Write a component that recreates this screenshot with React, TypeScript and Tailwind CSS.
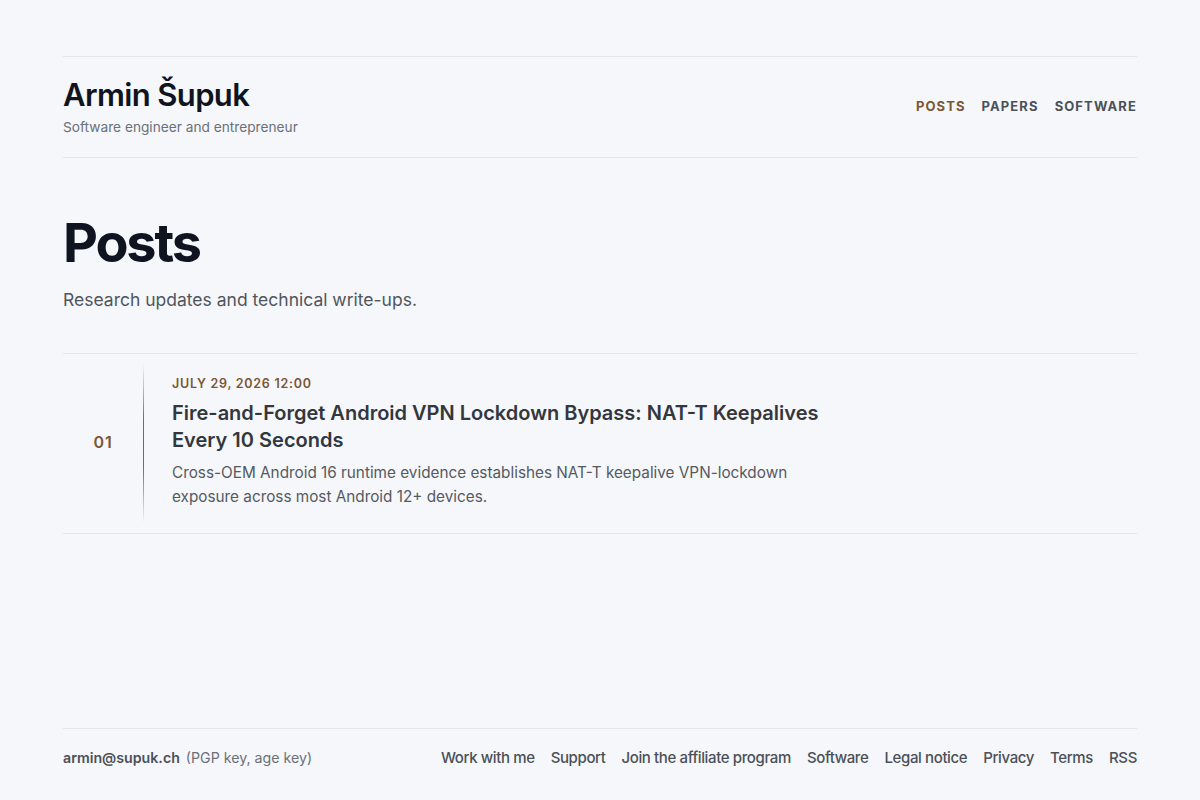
import React from "react";

const posts = [
  {
    n: "01",
    date: "July 29, 2026 12:00",
    title: "Fire-and-Forget Android VPN Lockdown Bypass: NAT-T Keepalives Every 10 Seconds",
    summary:
      "Cross-OEM Android 16 runtime evidence establishes NAT-T keepalive VPN-lockdown exposure across most Android 12+ devices.",
  },
];

const footerLinks = [
  "Work with me",
  "Support",
  "Join the affiliate program",
  "Software",
  "Legal notice",
  "Privacy",
  "Terms",
  "RSS",
];

export default function App() {
  return (
    <div
      className="min-h-[800px] bg-[#f5f7fa] flex flex-col"
      style={{ fontFamily: "Inter, 'Noto Sans', sans-serif" }}
    >
      <div className="mx-auto w-[1074px] flex flex-col flex-1 pt-[56px]">
        <header className="flex items-center justify-between border-t border-b border-[#e2e5ea] h-[102px]">
          <div className="flex flex-col -mt-[2px]">
            <a className="text-[31px] leading-[38px] font-semibold text-[#0f1420] tracking-[-0.02em]">
              Armin Šupuk
            </a>
            <span className="text-[13.7px] leading-[20px] text-[#6b7079] mt-[3px]">
              Software engineer and entrepreneur
            </span>
          </div>
          <nav className="flex items-center gap-[16px] text-[13px] font-bold tracking-[0.085em] uppercase">
            <a className="text-[#7a5634]">Posts</a>
            <a className="text-[#4b5058]">Papers</a>
            <a className="text-[#4b5058]">Software</a>
          </nav>
        </header>

        <main className="flex-1">
          <section className="pt-[52px] pb-[39px]">
            <h1 className="text-[54px] leading-[66px] font-bold text-[#0f1420] tracking-[-0.04em]">
              Posts
            </h1>
            <p className="mt-[10px] text-[17.5px] leading-[28px] text-[#50555e]">
              Research updates and technical write-ups.
            </p>
          </section>

          <ol className="border-t border-[#e2e5ea]">
            {posts.map((p) => (
              <li key={p.n} className="flex border-b border-[#e2e5ea]">
                <div className="w-[80px] flex items-center justify-center py-[10px]">
                  <span className="text-[16px] font-semibold text-[#7a5634] tracking-[0.05em] -mt-[3px]">
                    {p.n}
                  </span>
                </div>
                <div className="w-px my-[10px] bg-[linear-gradient(to_bottom,transparent,#6b6e74_35%,#8a6238_50%,#6b6e74_65%,transparent)]" />
                <div className="pl-[28px] pt-[21px] pb-[24px] max-w-[690px]">
                  <div className="text-[12.5px] leading-[18px] font-semibold uppercase tracking-[0.06em] text-[#7a5634]">
                    {p.date}
                  </div>
                  <h2 className="mt-[7px] text-[20px] leading-[27px] font-semibold text-[#33373d]">
                    {p.title}
                  </h2>
                  <p className="mt-[7px] text-[15.3px] leading-[24px] text-[#555a62]">
                    {p.summary}
                  </p>
                </div>
              </li>
            ))}
          </ol>
        </main>

        <footer className="border-t border-[#e2e5ea] flex items-center justify-between h-[60px] mb-[12px]">
          <div className="flex items-center gap-[6px] text-[14.2px] -mt-[1px]">
            <a className="font-semibold text-[#4b5058]">armin@supuk.ch</a>
            <span className="text-[#6b7079]">(PGP key, age key)</span>
          </div>
          <nav className="flex items-center gap-[16px] text-[15px] font-medium text-[#4b5058] tracking-[-0.025em]">
            {footerLinks.map((l) => (
              <a key={l}>{l}</a>
            ))}
          </nav>
        </footer>
      </div>
    </div>
  );
}
